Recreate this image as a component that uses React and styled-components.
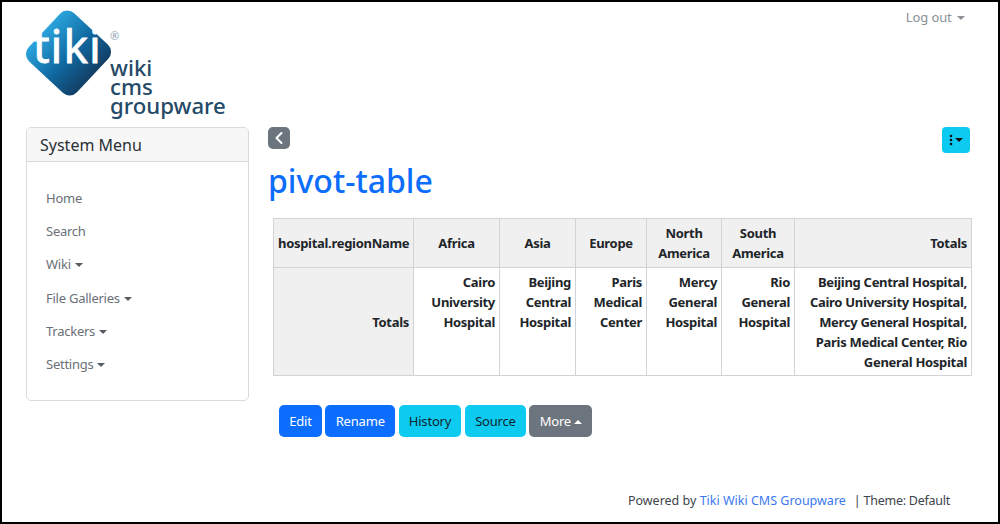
import React from "react";
import styled, { createGlobalStyle } from "styled-components";

const GlobalStyle = createGlobalStyle`
    html, body {
        margin: 0;
        padding: 0;
        background: #fff;
    }
    body {
        font-family: "Noto Sans", "Open Sans", sans-serif;
        font-size: 13px;
        color: #212529;
    }
    * {
        box-sizing: border-box;
    }
`;

const menuItems = [
    { label: "Home" },
    { label: "Search" },
    { label: "Wiki", caret: true },
    { label: "File Galleries", caret: true },
    { label: "Trackers", caret: true },
    { label: "Settings", caret: true },
];

const regions = [
    { name: "Africa", hospital: "Cairo University Hospital" },
    { name: "Asia", hospital: "Beijing Central Hospital" },
    { name: "Europe", hospital: "Paris Medical Center" },
    { name: "North America", hospital: "Mercy General Hospital" },
    { name: "South America", hospital: "Rio General Hospital" },
];

const Logo = () => (
    <svg width="205" height="112" viewBox="0 0 205 112">
        <defs>
            <linearGradient id="tikiBlue" x1="0" y1="0.5" x2="1" y2="0.5">
                <stop offset="0" stopColor="#2aa3dc" />
                <stop offset="0.55" stopColor="#10689f" />
                <stop offset="1" stopColor="#123f66" />
            </linearGradient>
        </defs>
        <rect
            x="9.5"
            y="14"
            width="66"
            height="66"
            rx="10"
            transform="rotate(43 42.5 47)"
            fill="url(#tikiBlue)"
        />
        <text x="7" y="57" fill="#fff" stroke="#fff" strokeWidth="0.8" fontFamily="Noto Sans" fontSize="46" letterSpacing="1">tiki</text>
        <text x="84" y="34" fill="#8aa0b0" fontFamily="Noto Sans" fontSize="11">®</text>
    </svg>
);

const LogoWords = () => (
    <WordStack>
        <span>wiki</span>
        <span>cms</span>
        <span>groupware</span>
    </WordStack>
);

const App = () => {
    return (
        <Page>
            <GlobalStyle />
            <Header>
                <LogoBox>
                    <Logo />
                    <LogoWords />
                </LogoBox>
                <LogOut>
                    Log out <Caret $color="#8a9096" $gap="2px" />
                </LogOut>
            </Header>
            <Body>
                <Sidebar>
                    <SidebarTitle>System Menu</SidebarTitle>
                    <Menu>
                        {menuItems.map((item) => (
                            <MenuItem key={item.label}>
                                {item.label}
                                {item.caret && <Caret $color="#555c63" $gap="4px" />}
                            </MenuItem>
                        ))}
                    </Menu>
                </Sidebar>
                <Main>
                    <TopRow>
                        <BackButton>
                            <svg width="10" height="14" viewBox="0 0 10 14">
                                <path d="M7.5 2 L2.5 7 L7.5 12" fill="none" stroke="#fff" strokeWidth="2" strokeLinecap="round" strokeLinejoin="round" />
                            </svg>
                        </BackButton>
                        <ActionsButton>
                            <svg width="4" height="12" viewBox="0 0 4 12">
                                <circle cx="2" cy="2" r="1.3" fill="#111" />
                                <circle cx="2" cy="6" r="1.3" fill="#111" />
                                <circle cx="2" cy="10" r="1.3" fill="#111" />
                            </svg>
                            <Caret $color="#111" $gap="2px" />
                        </ActionsButton>
                    </TopRow>
                    <Title>pivot-table</Title>
                    <Pivot>
                        <colgroup>
                            <col style={{ width: 140 }} />
                            <col style={{ width: 86 }} />
                            <col style={{ width: 76 }} />
                            <col style={{ width: 71 }} />
                            <col style={{ width: 75 }} />
                            <col style={{ width: 73 }} />
                            <col style={{ width: 177 }} />
                        </colgroup>
                        <thead>
                            <HeadRow>
                                <HeadCell>hospital.regionName</HeadCell>
                                {regions.map((r) => (
                                    <HeadCell key={r.name}>{r.name}</HeadCell>
                                ))}
                                <HeadCell $right>Totals</HeadCell>
                            </HeadRow>
                        </thead>
                        <tbody>
                            <tr>
                                <HeadCell $right>Totals</HeadCell>
                                {regions.map((r) => (
                                    <ValueCell key={r.name}>{r.hospital}</ValueCell>
                                ))}
                                <ValueCell>
                                    Beijing Central Hospital, Cairo University Hospital, Mercy General Hospital, Paris Medical Center, Rio General Hospital
                                </ValueCell>
                            </tr>
                        </tbody>
                    </Pivot>
                    <Buttons>
                        <Button $bg="#0d6efd" $fg="#fff">Edit</Button>
                        <Button $bg="#0d6efd" $fg="#fff">Rename</Button>
                        <Button $bg="#0dcaf0" $fg="#10262c">History</Button>
                        <Button $bg="#0dcaf0" $fg="#10262c">Source</Button>
                        <Button $bg="#6c757d" $fg="#fff">
                            More
                            <Caret $color="#fff" $gap="3px" $up />
                        </Button>
                    </Buttons>
                </Main>
            </Body>
            <Footer>
                Powered by <FooterLink>Tiki Wiki CMS Groupware</FooterLink>
                <FooterRest>| Theme: Default</FooterRest>
            </Footer>
        </Page>
    );
};

const Page = styled.div`
    width: 1000px;
    height: 524px;
    border: 2px solid #000;
    display: flex;
    flex-direction: column;
    overflow: hidden;
`;
const Header = styled.header`
    height: 125px;
    padding: 0 33px 0 24px;
    display: flex;
    justify-content: space-between;
    align-items: flex-start;
`;
const LogoBox = styled.div`
    position: relative;
    width: 205px;
    height: 118px;
    padding-top: 4px;
`;
const WordStack = styled.div`
    position: absolute;
    left: 84px;
    top: 56px;
    display: flex;
    flex-direction: column;
    font-size: 22.2px;
    font-weight: 500;
    line-height: 19px;
    color: #254a68;
`;
const LogOut = styled.div`
    margin-top: 7px;
    color: #8a9096;
    font-size: 13px;
    letter-spacing: -0.1px;
    line-height: 16px;
`;
const Caret = styled.span`
    display: inline-block;
    margin-left: ${(p) => p.$gap};
    vertical-align: 2px;
    border-left: 4px solid transparent;
    border-right: 4px solid transparent;
    border-top: ${(p) => (p.$up ? "0" : `4px solid ${p.$color}`)};
    border-bottom: ${(p) => (p.$up ? `4px solid ${p.$color}` : "0")};
`;
const Body = styled.div`
    display: flex;
    padding-left: 24px;
    align-items: flex-start;
`;
const Sidebar = styled.aside`
    width: 223px;
    height: 274px;
    flex-shrink: 0;
    border: 1px solid #d9dadb;
    border-radius: 5px;
    overflow: hidden;
`;
const SidebarTitle = styled.div`
    height: 34px;
    padding-left: 13px;
    background: #f7f7f7;
    border-bottom: 1px solid #d9dadb;
    font-size: 16px;
    line-height: 34px;
    color: #2b3035;
`;
const Menu = styled.ul`
    list-style: none;
    margin: 0;
    padding: 20px 0 0 19px;
`;
const MenuItem = styled.li`
    height: 33.2px;
    line-height: 33px;
    color: #6a7076;
    font-size: 13px;
    letter-spacing: -0.25px;
`;
const Main = styled.main`
    width: 706px;
    margin-left: 19px;
`;
const TopRow = styled.div`
    display: flex;
    justify-content: space-between;
    align-items: flex-start;
    padding-right: 4px;
`;
const BackButton = styled.button`
    width: 22px;
    height: 22px;
    padding: 0;
    border: 0;
    border-radius: 5px;
    background: #6c757d;
    display: flex;
    align-items: center;
    justify-content: center;
`;
const ActionsButton = styled.button`
    width: 28px;
    height: 26px;
    padding: 0;
    border: 0;
    border-radius: 4px;
    background: #0dcaf0;
    display: flex;
    align-items: center;
    justify-content: center;
`;
const Title = styled.h1`
    margin: 8px 0 17px;
    font-size: 32px;
    line-height: 40px;
    font-weight: 500;
    color: #0d6efd;
`;
const Pivot = styled.table`
    width: 698px;
    margin-left: 5px;
    table-layout: fixed;
    border-collapse: collapse;
    font-size: 13px;
    letter-spacing: -0.3px;
    line-height: 20px;
`;
const HeadRow = styled.tr`
    height: 49px;
`;
const HeadCell = styled.th`
    border: 1px solid #d0d4d9;
    background: #f0f0f0;
    padding: 4px;
    font-weight: 700;
    color: #212529;
    text-align: ${(p) => (p.$right ? "right" : "center")};
`;
const ValueCell = styled.td`
    border: 1px solid #d0d4d9;
    padding: 4px 4px 3px;
    font-weight: 700;
    text-align: right;
    vertical-align: top;
`;
const Buttons = styled.div`
    display: flex;
    gap: 3.5px;
    margin: 29px 0 0 11px;
`;
const Button = styled.button`
    height: 32px;
    padding: 0 10.25px;
    border: 0;
    border-radius: 5px;
    font-family: inherit;
    font-size: 13px;
    letter-spacing: -0.2px;
    background: ${(p) => p.$bg};
    color: ${(p) => p.$fg};
`;
const Footer = styled.footer`
    margin-top: auto;
    padding: 0 48px 12px 0;
    text-align: right;
    font-size: 12.5px;
    line-height: 18px;
    color: #3e444a;
`;
const FooterLink = styled.a`
    color: #3b78f0;
`;
const FooterRest = styled.span`
    margin-left: 8px;
    letter-spacing: -0.25px;
`;

export default App;
